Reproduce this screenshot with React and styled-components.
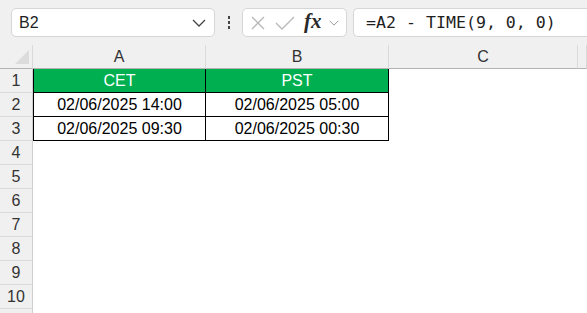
import React from 'react';
import styled, {createGlobalStyle} from 'styled-components';

const GlobalStyle = createGlobalStyle`
    html, body {
        margin: 0;
        padding: 0;
        background: #ffffff;
        overflow: hidden;
    }
    body {
        font-family: "Liberation Sans", Arial, sans-serif;
    }
`;

const rows = [
    ['CET', 'PST'],
    ['02/06/2025 14:00', '02/06/2025 05:00'],
    ['02/06/2025 09:30', '02/06/2025 00:30'],
];

const App = () => {
    const emptyRows = [4, 5, 6, 7, 8, 9, 10, ''];

    return (
        <>
            <GlobalStyle />
            <Page>
                <FormulaBar>
                    <NameBox>
                        <span>B2</span>
                        <Chevron />
                    </NameBox>
                    <Dots>
                        <i /><i /><i />
                    </Dots>
                    <FxBox>
                        <svg width="14" height="14" viewBox="0 0 14 14">
                            <path d="M1 1 L13 13 M13 1 L1 13" stroke="#b8b8b8" strokeWidth="1.3" fill="none" />
                        </svg>
                        <svg width="20" height="14" viewBox="0 0 20 14">
                            <path d="M1 7 L7 13 L19 1" stroke="#b8b8b8" strokeWidth="1.3" fill="none" />
                        </svg>
                        <Fx>fx</Fx>
                        <Chevron small />
                    </FxBox>
                    <FormulaInput>=A2 - TIME(9, 0, 0)</FormulaInput>
                </FormulaBar>

                <Sheet>
                    <Corner />
                    <ColHead>A</ColHead>
                    <ColHead>B</ColHead>
                    <ColHead>C</ColHead>
                    <ColHead />

                    {rows.map((row, i) => (
                        <React.Fragment key={i}>
                            <RowHead>{i + 1}</RowHead>
                            {row.map((value, j) => (
                                <Cell key={j} $header={i === 0} $first={j === 0}>{value}</Cell>
                            ))}
                            <Blank />
                            <Blank />
                        </React.Fragment>
                    ))}

                    {emptyRows.map((n, i) => (
                        <React.Fragment key={i}>
                            <RowHead>{n}</RowHead>
                            <Blank />
                            <Blank />
                            <Blank />
                            <Blank />
                        </React.Fragment>
                    ))}
                </Sheet>
            </Page>
        </>
    );
};

const Chevron = ({small}) => (
    <svg width={small ? 10 : 14} height={small ? 6 : 8} viewBox="0 0 14 8">
        <path d="M1 1 L7 7 L13 1" stroke={small ? '#9a9a9a' : '#444'} strokeWidth={small ? 1.4 : 1.3} fill="none" />
    </svg>
);

const Page = styled.div`
    width: 587px;
    height: 313px;
    overflow: hidden;
    background: #ffffff;
`;

const FormulaBar = styled.div`
    height: 45px;
    box-sizing: border-box;
    padding: 8px 0 8px 11px;
    background: #f0f0f0;
    display: flex;
    align-items: stretch;
`;

const NameBox = styled.div`
    width: 204px;
    height: 29px;
    box-sizing: border-box;
    background: #ffffff;
    border: 1px solid #d6d6d6;
    border-radius: 5px;
    display: flex;
    align-items: center;
    justify-content: space-between;
    padding: 0 8px 0 7px;
    font-size: 16px;
    color: #1f1f1f;
`;

const Dots = styled.div`
    width: 27px;
    display: flex;
    flex-direction: column;
    align-items: center;
    justify-content: center;
    gap: 2px;

    i {
        display: block;
        width: 2px;
        height: 3px;
        background: #444;
    }
`;

const FxBox = styled.div`
    width: 105px;
    height: 29px;
    box-sizing: border-box;
    background: #ffffff;
    border: 1px solid #d6d6d6;
    border-radius: 5px;
    display: flex;
    align-items: center;
    padding: 0 4px 0 8px;
    gap: 10px;
`;

const Fx = styled.span`
    font-family: "Liberation Serif", "Times New Roman", serif;
    font-style: italic;
    font-weight: bold;
    font-size: 21px;
    color: #2a2a2a;
    margin-left: -1px;
    margin-right: -3px;
    line-height: 1;
    padding-bottom: 2px;
`;

const FormulaInput = styled.div`
    flex: 1;
    margin-left: 6px;
    height: 29px;
    box-sizing: border-box;
    background: #ffffff;
    border: 1px solid #d6d6d6;
    border-right: none;
    border-radius: 5px 0 0 5px;
    display: flex;
    align-items: center;
    padding-left: 12px;
    font-family: "DejaVu Sans Mono", "Liberation Mono", monospace;
    font-size: 16.6px;
    color: #1f1f1f;
    white-space: pre;
`;

const Sheet = styled.div`
    display: grid;
    grid-template-columns: 33px 173px 183px 189px 1fr;
    grid-auto-rows: 24px;
    font-size: 16px;
`;

const Corner = styled.div`
    background: #f0f0f0;
    border-bottom: 1px solid #b4b4b4;
    border-right: 1px solid #dadada;
    box-sizing: border-box;
    position: relative;

    &::after {
        content: '';
        position: absolute;
        right: 3px;
        bottom: 4px;
        width: 0;
        height: 0;
        border-left: 14px solid transparent;
        border-bottom: 14px solid #dcdcdc;
    }
`;

const ColHead = styled.div`
    background: #f0f0f0;
    border-bottom: 1px solid #b4b4b4;
    border-right: 1px solid #dadada;
    box-sizing: border-box;
    display: flex;
    align-items: center;
    justify-content: center;
    font-size: 16px;
    color: #333;
    padding-top: 1px;
`;

const RowHead = styled.div`
    background: #f0f0f0;
    border-bottom: 1px solid #dadada;
    border-right: 1px solid #cfcfcf;
    box-sizing: border-box;
    display: flex;
    align-items: center;
    justify-content: center;
    font-size: 16px;
    color: #333;
`;

const Cell = styled.div`
    box-sizing: border-box;
    background: ${p => (p.$header ? '#00b050' : '#ffffff')};
    color: ${p => (p.$header ? '#ffffff' : '#000000')};
    border-right: 1px solid #000;
    border-bottom: 1px solid #000;
    border-left: ${p => (p.$first ? '1px solid #000' : 'none')};
    display: flex;
    align-items: center;
    justify-content: center;
    font-size: 16px;
`;

const Blank = styled.div`
    background: #ffffff;
`;

export default App;
